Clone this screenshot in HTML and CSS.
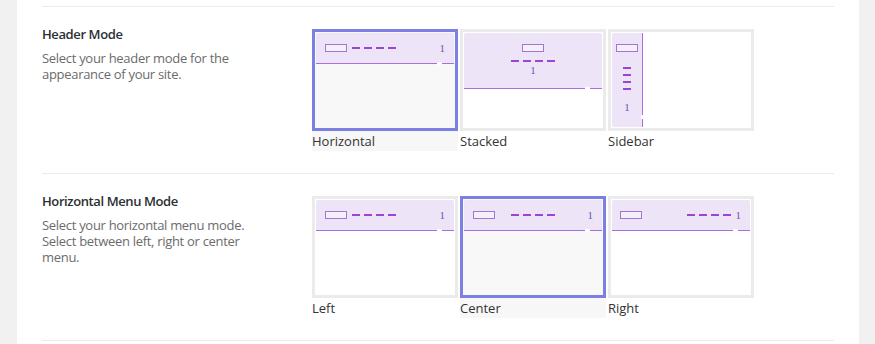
FILE: index.html
```html
<!DOCTYPE html>
<html>
<head>
<meta charset="utf-8">
<link rel="stylesheet" href="styles.css">
</head>
<body>
<div class="panel">
  <div class="section">
    <div class="info">
      <div class="title">Header Mode</div>
      <div class="desc">Select your header mode for the appearance of your site.</div>
    </div>
    <div class="options">
      <div class="opt selected">
        <div class="frame">
          <div class="screen">
            <div class="band band-h lay-left">
              <span class="logo"></span><span class="dashes"><i></i><i></i><i></i><i></i></span><span class="num">1</span>
              <span class="notch"></span>
            </div>
          </div>
        </div>
        <div class="label">Horizontal</div>
      </div>
      <div class="opt">
        <div class="frame">
          <div class="screen">
            <div class="band band-stacked">
              <span class="logo"></span><span class="dashes"><i></i><i></i><i></i><i></i></span><span class="num">1</span>
              <span class="notch"></span>
            </div>
          </div>
        </div>
        <div class="label">Stacked</div>
      </div>
      <div class="opt">
        <div class="frame">
          <div class="screen screen-row">
            <div class="band band-side">
              <span class="logo"></span><span class="vdashes"><i></i><i></i><i></i><i></i></span><span class="num">1</span>
              <span class="notch notch-v"></span>
            </div>
          </div>
        </div>
        <div class="label">Sidebar</div>
      </div>
    </div>
  </div>
  <div class="section">
    <div class="info">
      <div class="title">Horizontal Menu Mode</div>
      <div class="desc">Select your horizontal menu mode. Select between left, right or center menu.</div>
    </div>
    <div class="options">
      <div class="opt">
        <div class="frame">
          <div class="screen">
            <div class="band band-h lay-left">
              <span class="logo"></span><span class="dashes"><i></i><i></i><i></i><i></i></span><span class="num">1</span>
              <span class="notch"></span>
            </div>
          </div>
        </div>
        <div class="label">Left</div>
      </div>
      <div class="opt selected">
        <div class="frame">
          <div class="screen">
            <div class="band band-h lay-center">
              <span class="logo"></span><span class="dashes"><i></i><i></i><i></i><i></i></span><span class="num">1</span>
              <span class="notch"></span>
            </div>
          </div>
        </div>
        <div class="label">Center</div>
      </div>
      <div class="opt">
        <div class="frame">
          <div class="screen">
            <div class="band band-h lay-right">
              <span class="logo"></span><span class="dashes"><i></i><i></i><i></i><i></i></span><span class="num">1</span>
              <span class="notch"></span>
            </div>
          </div>
        </div>
        <div class="label">Right</div>
      </div>
    </div>
  </div>
  <div class="section"></div>
</div>
</body>
</html>
```
FILE: styles.css
```css
* { box-sizing: border-box; }
html, body { margin: 0; height: 100%; }
body {
  background: #f1f1f1;
  font-family: "Open Sans", "Noto Sans", sans-serif;
  overflow: hidden;
}
.panel {
  margin-left: 17px;
  width: 842px;
  height: 344px;
  background: #fff;
  padding: 6px 25px 0 25px;
  overflow: hidden;
}
.section {
  display: flex;
  border-top: 1px solid #ececec;
  padding: 22px 0;
}
.info {
  width: 270px;
  flex: none;
  padding-right: 20px;
}
.title {
  font-size: 13px;
  font-weight: 600;
  color: #2b2f33;
  line-height: 16px;
  letter-spacing: -0.4px;
  margin-top: -3px;
  margin-bottom: 8px;
}
.desc {
  font-size: 13px;
  color: #6b6b6b;
  line-height: 16px;
  letter-spacing: -0.3px;
  max-width: 215px;
}
.options {
  display: flex;
  gap: 2px;
}
.opt { width: 146px; }
.frame {
  height: 102px;
  border: 3px solid #ebebeb;
  padding: 1px;
  background: #fff;
}
.selected .frame {
  border-color: #7c80e2;
  background: #f8f8f8;
}
.screen {
  height: 100%;
  display: flex;
  flex-direction: column;
}
.screen-row { flex-direction: row; }
.label {
  font-size: 13px;
  line-height: 20px;
  color: #333;
}
.selected .label { background: #f7f7f7; }

.band {
  position: relative;
  background: #ede4f7;
  border-bottom: 1px solid #a96fdc;
  border-radius: 2px 2px 0 0;
}
.band-h {
  height: 31px;
  display: flex;
  align-items: center;
  padding: 0 9px;
}
.lay-left .dashes { margin-left: 5px; }
.lay-left .num { margin-left: auto; }
.lay-center {
  display: grid;
  grid-template-columns: 1fr auto 1fr;
}
.lay-center .num { justify-self: end; }
.lay-right .dashes { margin-left: auto; margin-right: 5px; }
.lay-right { padding-left: 8px; padding-right: 9px; }

.band-stacked {
  height: 56px;
  display: flex;
  flex-direction: column;
  align-items: center;
  padding-top: 11px;
}
.band-stacked .dashes { margin-top: 8px; }
.band-stacked .num { margin-top: 3px; }

.band-side {
  width: 31px;
  height: 100%;
  border-bottom: none;
  border-right: 1px solid #a96fdc;
  border-radius: 2px 0 0 2px;
  display: flex;
  flex-direction: column;
  align-items: center;
  padding-top: 11px;
}
.band-side .vdashes { margin-top: 15px; }
.band-side .num { margin-top: 12px; }

.logo {
  display: block;
  width: 22px;
  height: 8px;
  border: 1px solid #a575d6;
  background: #f4f0fa;
  flex: none;
}
.dashes {
  display: flex;
  gap: 4px;
  flex: none;
}
.dashes i {
  display: block;
  width: 8px;
  height: 2px;
  background: #9b45d6;
}
.vdashes {
  display: flex;
  flex-direction: column;
  gap: 5px;
}
.vdashes i {
  display: block;
  width: 8px;
  height: 2px;
  background: #9b45d6;
}
.num {
  font-family: "Liberation Serif", serif;
  font-size: 11px;
  line-height: 11px;
  color: #7b4fb4;
}
.notch {
  position: absolute;
  right: 12px;
  bottom: -2px;
  width: 5px;
  height: 3px;
  background: #fff;
  border-radius: 1px;
}
.notch-v {
  right: -2px;
  bottom: 8px;
  width: 3px;
  height: 4px;
}
```
